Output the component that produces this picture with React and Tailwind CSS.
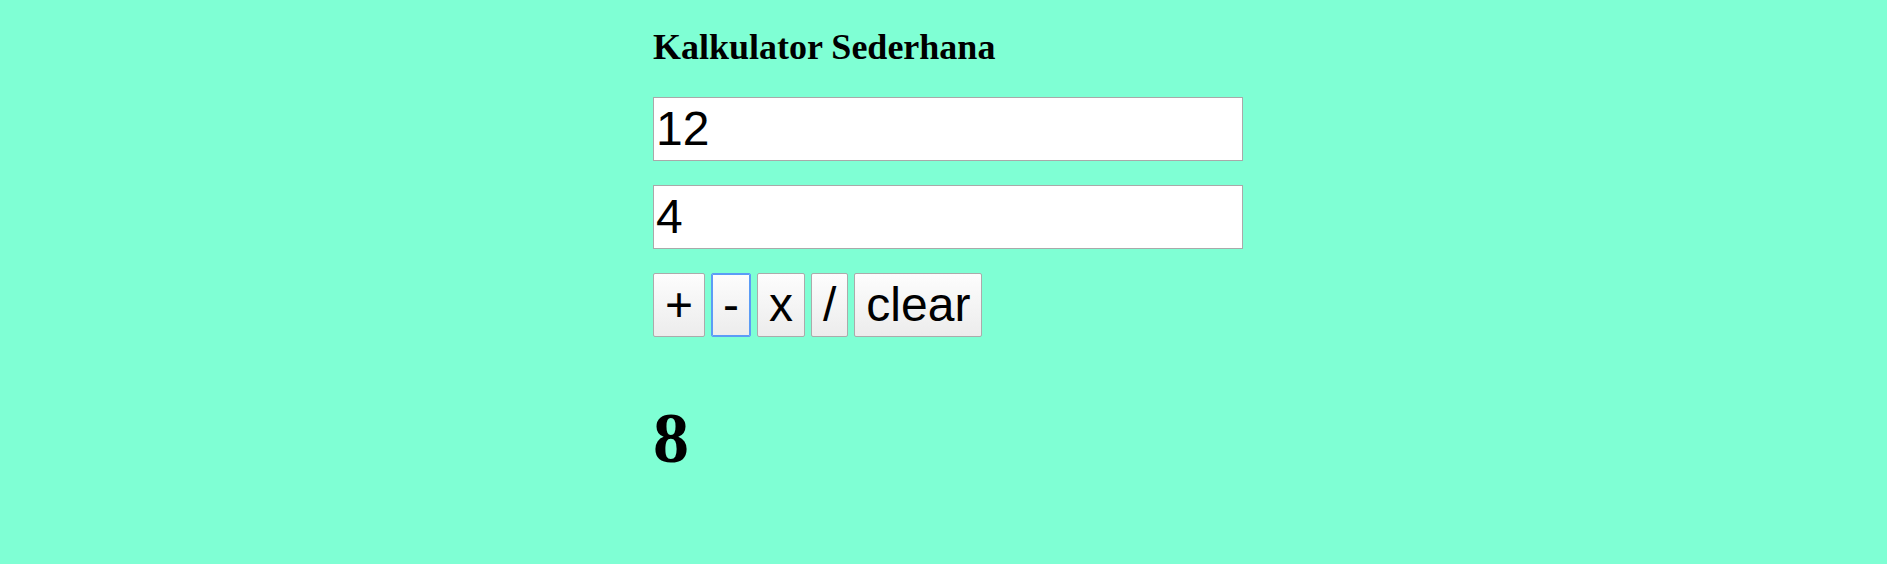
import React, { useState } from 'react';

const OPS = [
  { key: 'add', label: '+' },
  { key: 'sub', label: '-' },
  { key: 'mul', label: 'x' },
  { key: 'div', label: '/' },
];

export default function App() {
  const [a, setA] = useState('12');
  const [b, setB] = useState('4');
  const [result, setResult] = useState(8);
  const [active, setActive] = useState('sub');

  const calc = (op) => {
    setActive(op);
    const x = parseFloat(a) || 0;
    const y = parseFloat(b) || 0;
    if (op === 'add') setResult(x + y);
    if (op === 'sub') setResult(x - y);
    if (op === 'mul') setResult(x * y);
    if (op === 'div') setResult(y === 0 ? 'error' : x / y);
  };

  const clear = () => {
    setActive('clear');
    setA('');
    setB('');
    setResult('');
  };

  const btn = (key) =>
    'h-[64px] px-[11px] text-[48px] leading-none text-black rounded-[2px] border bg-gradient-to-b from-[#fdfdfd] to-[#ececec] cursor-pointer ' +
    (active === key
      ? 'border-[#5b9cf6] shadow-[inset_0_0_0_1px_#5b9cf6]'
      : 'border-[#ababab]');

  return (
    <div className="min-h-[564px] bg-[#7fffd4] pl-[653px] pt-[27px] text-black">
      <h1 className="font-['Liberation_Serif',serif] text-[36px] font-bold leading-[40px]">
        Kalkulator Sederhana
      </h1>

      <div className="mt-[30px] flex flex-col gap-[24px] font-['Liberation_Sans',Arial,sans-serif]">
        <input
          type="text"
          value={a}
          onChange={(e) => setA(e.target.value)}
          className="h-[64px] w-[590px] border border-[#a9a9a9] bg-white px-[2px] text-[48px] outline-none"
        />
        <input
          type="text"
          value={b}
          onChange={(e) => setB(e.target.value)}
          className="h-[64px] w-[590px] border border-[#a9a9a9] bg-white px-[2px] text-[48px] outline-none"
        />
        <div className="flex gap-[6px]">
          {OPS.map((op) => (
            <button key={op.key} className={btn(op.key)} onClick={() => calc(op.key)}>
              {op.label}
            </button>
          ))}
          <button className={btn('clear')} onClick={clear}>
            clear
          </button>
        </div>
      </div>

      <div className="mt-[61px] font-['Liberation_Serif',serif] text-[72px] font-bold leading-[80px]">
        {result}
      </div>
    </div>
  );
}
